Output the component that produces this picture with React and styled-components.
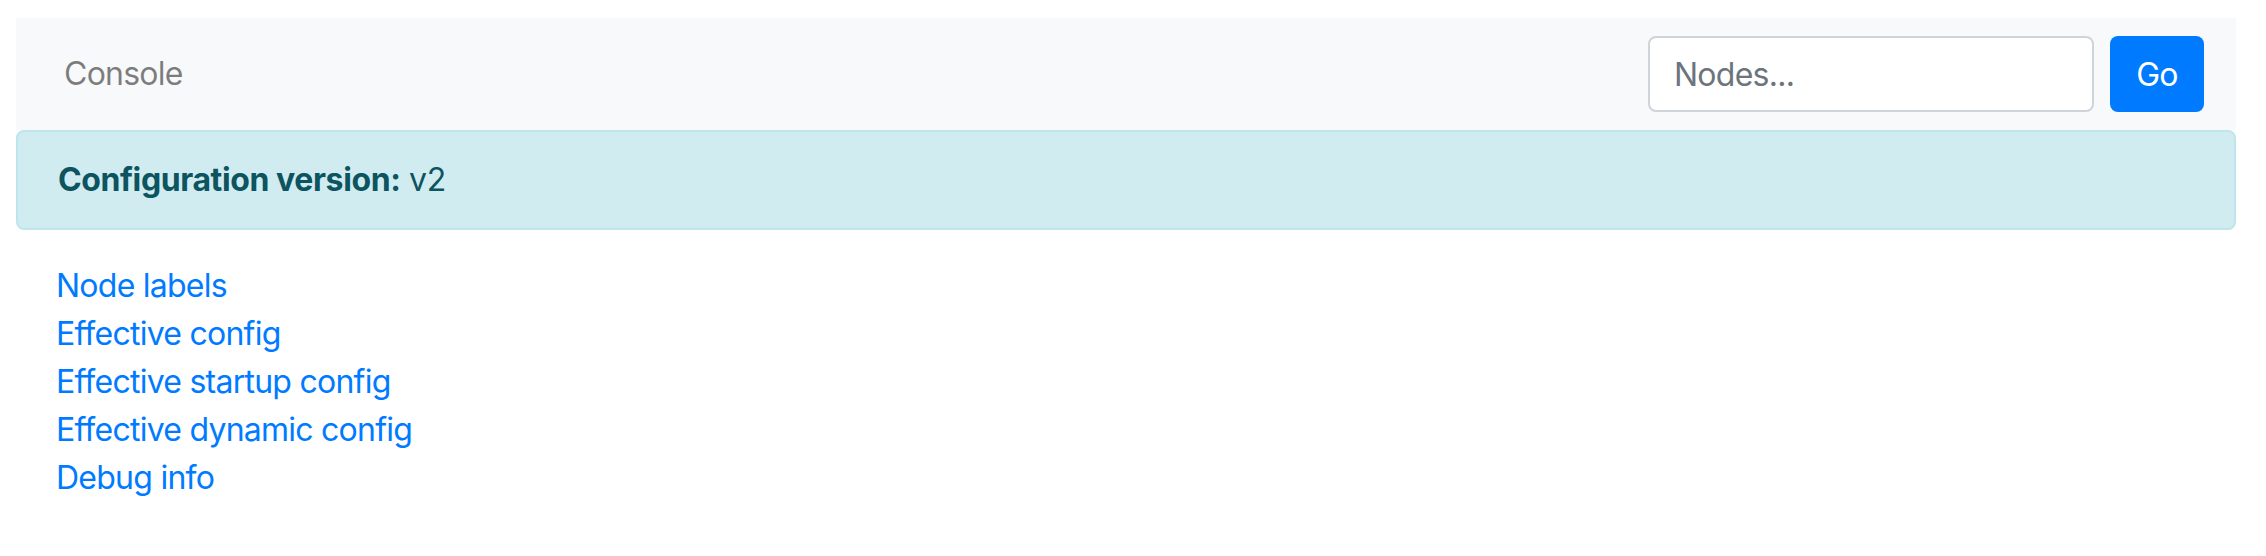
import styled, { createGlobalStyle } from 'styled-components'

const GlobalStyle = createGlobalStyle`
  body {
    margin: 18px 30px 0 16px;
    background: #ffffff;
    font-family: Inter, "Liberation Sans", Arial, sans-serif;
    font-size: 32px;
    line-height: 48px;
    letter-spacing: -0.75px;
    color: #212529;
  }`

const Navbar = styled.nav`
  display: flex;
  align-items: center;
  justify-content: space-between;
  padding: 18px 32px;

  background: #f8f9fa;`

const Brand = styled.a`
  padding: 0 16px;

  color: rgba(0, 0, 0, 0.5);
  font-size: 32px;
  text-decoration: none;`

const SearchForm = styled.form`
  display: flex;
  align-items: center;
  gap: 16px;`

const SearchInput = styled.input`
  box-sizing: border-box;
  width: 446px;
  height: 76px;
  padding: 0 24px;

  background: #ffffff;
  border: 2px solid #ced4da;
  border-radius: 8px;

  font-family: inherit;
  font-size: 32px;
  letter-spacing: inherit;
  color: #495057;

  &::placeholder {
    color: #6c757d;
  }`

const GoButton = styled.button`
  box-sizing: border-box;
  width: 94px;
  height: 76px;

  background: #007bff;
  border: none;
  border-radius: 8px;

  font-family: inherit;
  font-size: 32px;
  letter-spacing: inherit;
  color: #ffffff;
  cursor: pointer;`

const Alert = styled.div`
  box-sizing: border-box;
  height: 100px;
  margin-bottom: 32px;
  padding: 24px 40px;

  background: #d1ecf1;
  border: 2px solid #bee5eb;
  border-radius: 8px;

  color: #0c5460;
  letter-spacing: -0.4px;`

const LinkList = styled.ul`
  margin: 0;
  padding: 0 0 0 40px;
  list-style: none;`

const LinkItem = styled.li`
  line-height: 48px;`

const PageLink = styled.a`
  color: #007bff;
  text-decoration: none;`

const links = [
  'Node labels',
  'Effective config',
  'Effective startup config',
  'Effective dynamic config',
  'Debug info',
]

export default function App() {
  return (
    <>
      <GlobalStyle />
      <Navbar>
        <Brand href="#">Console</Brand>
        <SearchForm onSubmit={(e) => e.preventDefault()}>
          <SearchInput placeholder="Nodes..." />
          <GoButton type="submit">Go</GoButton>
        </SearchForm>
      </Navbar>
      <Alert>
        <strong>Configuration version:</strong> v2
      </Alert>
      <LinkList>
        {links.map((label) => (
          <LinkItem key={label}>
            <PageLink href="#">{label}</PageLink>
          </LinkItem>
        ))}
      </LinkList>
    </>
  )
}
